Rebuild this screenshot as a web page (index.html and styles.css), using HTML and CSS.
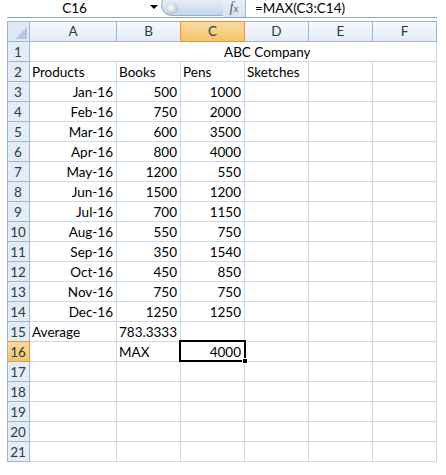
FILE: index.html
```html
<!DOCTYPE html>
<html>
<head>
<meta charset="utf-8">
<link rel="stylesheet" href="styles.css">
</head>
<body>
<div class="app">
  <div class="fbar">
    <div class="namebox">C16</div>
    <div class="dd"></div>
    <div class="pill"><span class="knob"></span></div>
    <div class="fx"><span class="f">f</span><span class="x">x</span></div>
    <div class="formula">=MAX(C3:C14)</div>
  </div>
  <div class="sheet">
    <div class="corner"><span class="tri"></span></div>
    <div class="ch">A</div><div class="ch">B</div><div class="ch sel">C</div><div class="ch">D</div><div class="ch">E</div><div class="ch">F</div>

    <div class="rh">1</div><div class="c title">ABC Company</div>

    <div class="rh">2</div><div class="c">Products</div><div class="c">Books</div><div class="c">Pens</div><div class="c">Sketches</div><div class="c"></div><div class="c"></div>
    <div class="rh">3</div><div class="c r">Jan-16</div><div class="c r">500</div><div class="c r">1000</div><div class="c"></div><div class="c"></div><div class="c"></div>
    <div class="rh">4</div><div class="c r">Feb-16</div><div class="c r">750</div><div class="c r">2000</div><div class="c"></div><div class="c"></div><div class="c"></div>
    <div class="rh">5</div><div class="c r">Mar-16</div><div class="c r">600</div><div class="c r">3500</div><div class="c"></div><div class="c"></div><div class="c"></div>
    <div class="rh">6</div><div class="c r">Apr-16</div><div class="c r">800</div><div class="c r">4000</div><div class="c"></div><div class="c"></div><div class="c"></div>
    <div class="rh">7</div><div class="c r">May-16</div><div class="c r">1200</div><div class="c r">550</div><div class="c"></div><div class="c"></div><div class="c"></div>
    <div class="rh">8</div><div class="c r">Jun-16</div><div class="c r">1500</div><div class="c r">1200</div><div class="c"></div><div class="c"></div><div class="c"></div>
    <div class="rh">9</div><div class="c r">Jul-16</div><div class="c r">700</div><div class="c r">1150</div><div class="c"></div><div class="c"></div><div class="c"></div>
    <div class="rh">10</div><div class="c r">Aug-16</div><div class="c r">550</div><div class="c r">750</div><div class="c"></div><div class="c"></div><div class="c"></div>
    <div class="rh">11</div><div class="c r">Sep-16</div><div class="c r">350</div><div class="c r">1540</div><div class="c"></div><div class="c"></div><div class="c"></div>
    <div class="rh">12</div><div class="c r">Oct-16</div><div class="c r">450</div><div class="c r">850</div><div class="c"></div><div class="c"></div><div class="c"></div>
    <div class="rh">13</div><div class="c r">Nov-16</div><div class="c r">750</div><div class="c r">750</div><div class="c"></div><div class="c"></div><div class="c"></div>
    <div class="rh">14</div><div class="c r">Dec-16</div><div class="c r">1250</div><div class="c r">1250</div><div class="c"></div><div class="c"></div><div class="c"></div>
    <div class="rh">15</div><div class="c">Average</div><div class="c r">783.3333</div><div class="c"></div><div class="c"></div><div class="c"></div><div class="c"></div>
    <div class="rh sel">16</div><div class="c"></div><div class="c">MAX</div><div class="c r active">4000<span class="handle"></span></div><div class="c"></div><div class="c"></div><div class="c"></div>
    <div class="rh">17</div><div class="c"></div><div class="c"></div><div class="c"></div><div class="c"></div><div class="c"></div><div class="c"></div>
    <div class="rh">18</div><div class="c"></div><div class="c"></div><div class="c"></div><div class="c"></div><div class="c"></div><div class="c"></div>
    <div class="rh">19</div><div class="c"></div><div class="c"></div><div class="c"></div><div class="c"></div><div class="c"></div><div class="c"></div>
    <div class="rh">20</div><div class="c"></div><div class="c"></div><div class="c"></div><div class="c"></div><div class="c"></div><div class="c"></div>
    <div class="rh">21</div><div class="c"></div><div class="c"></div><div class="c"></div><div class="c"></div><div class="c"></div><div class="c"></div>
  </div>
</div>
</body>
</html>
```
FILE: styles.css
```css
* { box-sizing: border-box; }
body {
  margin: 0;
  background: #fff;
  font-family: Lato, "Liberation Sans", sans-serif;
  font-size: 13.5px;
  color: #000;
}
.app {
  padding-left: 7px;
  width: 437px;
}
.fbar {
  height: 18px;
  border-bottom: 1px solid #8fa6c2;
  display: flex;
  align-items: stretch;
  position: relative;
  overflow: hidden;
}
.namebox {
  width: 133px;
  text-align: center;
  line-height: 16px;
  padding-left: 2px;
}
.dd {
  width: 21px;
  position: relative;
}
.dd::after {
  content: "";
  position: absolute;
  left: 10px;
  top: 5px;
  border-left: 4px solid transparent;
  border-right: 4px solid transparent;
  border-top: 4px solid #000;
}
.pill {
  width: 62px;
  margin-top: -6px;
  height: 22px;
  border: 1px solid #9bb0cc;
  border-radius: 11px 0 0 11px;
  border-right: none;
  background: linear-gradient(#f3f7fc, #dbe5f2 50%, #c6d5ea);
  position: relative;
}
.knob {
  position: absolute;
  left: 4px;
  top: 8px;
  width: 12px;
  height: 11px;
  border-radius: 50%;
  background: radial-gradient(circle at 40% 40%, #ffffff, #c8cdd4 60%, #9aa3ae);
}
.fx {
  width: 23px;
  background: linear-gradient(#e9eff7, #d8e2ef);
  border-right: 1px solid #a7b9d0;
  font-family: "Liberation Serif", serif;
  font-style: italic;
  color: #4e5e73;
  text-align: center;
  line-height: 15px;
  font-size: 14px;
}
.fx .x { font-size: 11px; }
.formula {
  flex: 1;
  padding-left: 9px;
  line-height: 16px;
}
.sheet {
  margin-top: 3px;
  display: grid;
  grid-template-columns: 22px 87px 64px 64px 64px 64px 64px;
  grid-auto-rows: 20px;
  grid-template-rows: 21px;
  border-left: 1px solid #9eb6ce;
}
.corner {
  border-top: 1px solid #9eb6ce;
  border-right: 1px solid #9eb6ce;
  border-bottom: 1px solid #9eb6ce;
  background: #dfe8f5;
  position: relative;
}
.tri {
  position: absolute;
  right: 2px;
  bottom: 2px;
  width: 0;
  height: 0;
  border-left: 12px solid transparent;
  border-bottom: 12px solid #b4c6df;
}
.ch {
  border-top: 1px solid #9eb6ce;
  border-right: 1px solid #9eb6ce;
  border-bottom: 1px solid #9eb6ce;
  background: linear-gradient(#f7f9fc, #e4ebf5);
  text-align: center;
  line-height: 19px;
  color: #27413e;
}
.ch.sel {
  background: linear-gradient(#f9dba2, #f2c46c);
  border-color: #f29436;
  border-left: 1px solid #f29436;
  margin-left: -1px;
}
.rh {
  background: #e4ecf7;
  border-right: 1px solid #9eb6ce;
  border-bottom: 1px solid #9eb6ce;
  text-align: center;
  line-height: 20px;
  color: #27413e;
  padding-right: 1px;
}
.rh.sel {
  background: linear-gradient(#f9dba2, #f2c46c);
  border-color: #f29436;
  border-top: 1px solid #f29436;
  margin-top: -1px;
  line-height: 20px;
}
.c {
  border-right: 1px solid #d0d7e5;
  border-bottom: 1px solid #d0d7e5;
  padding: 0 3px 0 2px;
  line-height: 20px;
  white-space: nowrap;
}
.c.r { text-align: right; }
.c.title {
  grid-column: span 6;
  padding-left: 194px;
}
.c.active {
  position: relative;
}
.c.active::after {
  content: "";
  position: absolute;
  left: -2px;
  top: -2px;
  right: -2px;
  bottom: -1px;
  border: 2px solid #000;
}
.handle {
  position: absolute;
  right: -4px;
  bottom: -3px;
  width: 6px;
  height: 6px;
  background: #000;
  border: 1px solid #fff;
  z-index: 2;
}
```
